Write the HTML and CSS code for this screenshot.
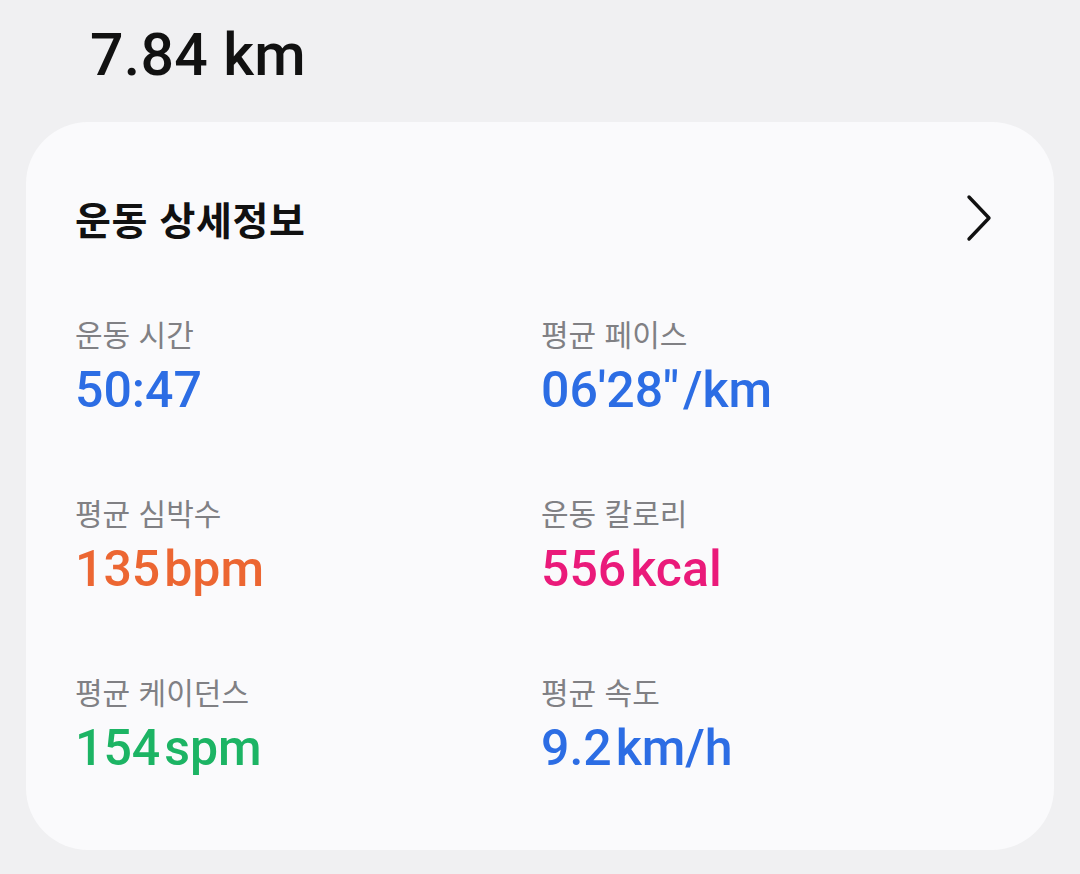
FILE: index.html
```html
<!DOCTYPE html>
<html lang="ko">
<head>
    <meta charset="UTF-8">
    <meta name="viewport" content="width=device-width, initial-scale=1.0">
    <title>운동 상세정보</title>
    <link rel="stylesheet" href="styles.css">
</head>
<body>
<div class="distance">7.84 km</div>

<div class="card">
    <div class="card-head">
        <h2>운동 상세정보</h2>
        <svg class="chevron" width="30" height="48" viewBox="0 0 30 48">
            <polyline points="4,3 24,24 4,45" fill="none" stroke="#111" stroke-width="3.4" stroke-linecap="round" stroke-linejoin="round"/>
        </svg>
    </div>

    <div class="stats">
        <div class="stat">
            <div class="label">운동 시간</div>
            <div class="value blue">50:47</div>
        </div>
        <div class="stat">
            <div class="label">평균 페이스</div>
            <div class="value blue">06'28"<span class="unit">/km</span></div>
        </div>
        <div class="stat">
            <div class="label">평균 심박수</div>
            <div class="value orange">135<span class="unit">bpm</span></div>
        </div>
        <div class="stat">
            <div class="label">운동 칼로리</div>
            <div class="value pink">556<span class="unit">kcal</span></div>
        </div>
        <div class="stat">
            <div class="label">평균 케이던스</div>
            <div class="value green">154<span class="unit">spm</span></div>
        </div>
        <div class="stat">
            <div class="label">평균 속도</div>
            <div class="value blue">9.2<span class="unit">km/h</span></div>
        </div>
    </div>
</div>
</body>
</html>
```

FILE: styles.css
```css
body {
    margin: 0;
    padding: 0;
    background: #f0f0f2;
    font-family: Roboto, "Noto Sans CJK KR", sans-serif;
    color: #111;
}

.distance {
    font-size: 59px;
    font-weight: 500;
    line-height: 1;
    padding: 25px 0 0 90px;
    height: 97px;
    box-sizing: border-box;
    letter-spacing: 0.3px;
}

.card {
    margin: 25px 26px 0 26px;
    background: #fafafc;
    border-radius: 62px;
    padding: 70px 59px 68px 49px;
    height: 728px;
    box-sizing: border-box;
}

.card-head {
    display: flex;
    align-items: center;
    justify-content: space-between;
}

.card-head h2 {
    margin: 0;
    font-family: "Noto Sans CJK KR", sans-serif;
    font-size: 39px;
    font-weight: 700;
    line-height: 52px;
    letter-spacing: 0.6px;
}

.stats {
    display: grid;
    grid-template-columns: 466px 1fr;
    row-gap: 69px;
    margin-top: 69px;
}

.label {
    font-family: "Noto Sans CJK KR", sans-serif;
    font-size: 30px;
    color: #808084;
    line-height: 40px;
}

.value {
    font-size: 50px;
    font-weight: 500;
    line-height: 66px;
    padding-top: 4px;
}

.unit {
    margin-left: 4px;
}

.blue { color: #2c6de4; }
.orange { color: #ec6632; }
.pink { color: #ea1a7a; }
.green { color: #1cb464; }
```
